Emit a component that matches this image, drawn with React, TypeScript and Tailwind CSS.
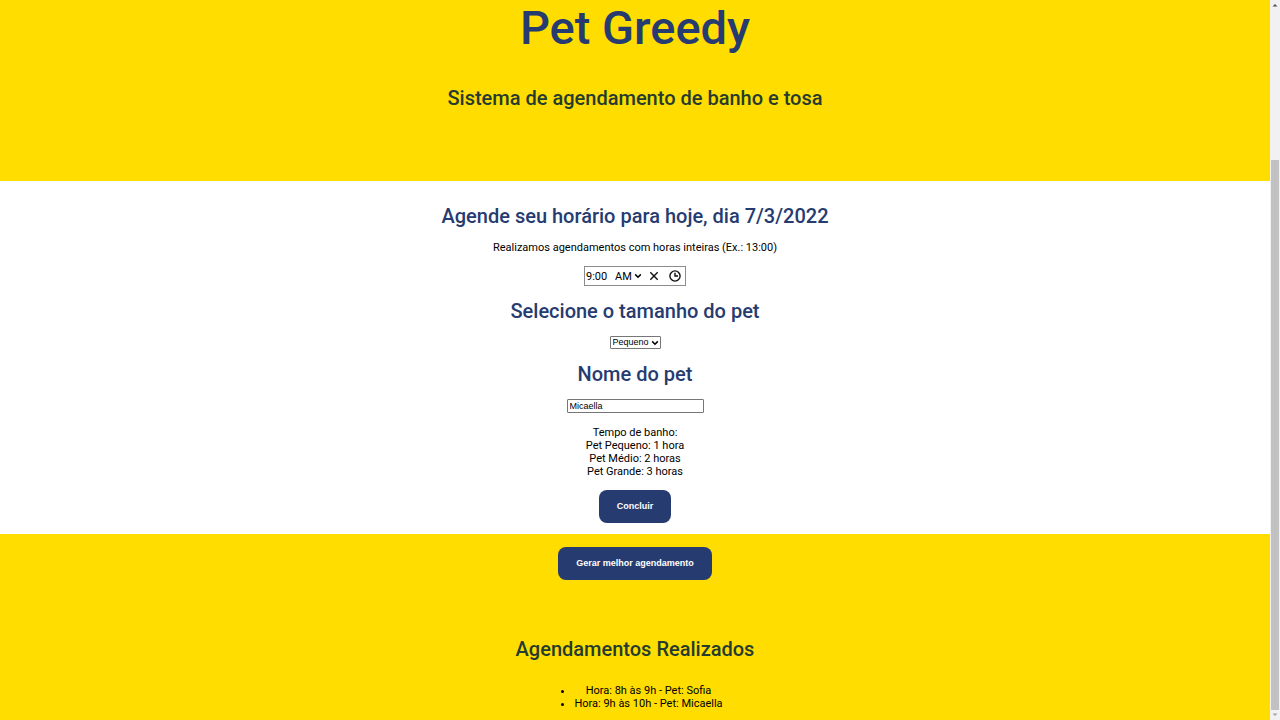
import { useState } from "react";

const bathTimes = ["Pet Pequeno: 1 hora", "Pet Médio: 2 horas", "Pet Grande: 3 horas"];
const bookings = ["Hora: 8h às 9h - Pet: Sofia", "Hora: 9h às 10h - Pet: Micaella"];

const heading = "text-[20px] leading-6 font-medium";
const button =
  "h-[33px] rounded-lg bg-[#263b70] px-[18px] font-['Liberation_Sans',sans-serif] text-[9px] font-bold text-white";

function Chevron({ className }: { className: string }) {
  return (
    <svg viewBox="0 0 8 6" className={className} fill="none" stroke="currentColor" strokeWidth="1.5" aria-hidden="true">
      <path d="M1.2 1.4 4 4.2 6.8 1.4" />
    </svg>
  );
}

function TimeField() {
  const [time, setTime] = useState("9:00");
  return (
    <div className="mt-3 flex h-5 w-[102px] items-center border border-[#8c8c8c] bg-white pl-px text-[11px]">
      <input
        aria-label="Horário"
        value={time}
        onChange={(e) => setTime(e.target.value)}
        className="w-[29px] bg-transparent outline-none"
      />
      <div className="relative flex items-center">
        <select aria-label="Período" className="w-[27px] appearance-none bg-transparent outline-none">
          <option>AM</option>
          <option>PM</option>
        </select>
        <Chevron className="pointer-events-none absolute right-0 h-[6px] w-2" />
      </div>
      <button type="button" aria-label="Limpar" onClick={() => setTime("")} className="ml-[7px]">
        <svg viewBox="0 0 10 10" className="size-[10px]" fill="none" stroke="#111" strokeWidth="1.4" aria-hidden="true">
          <path d="m1.3 1.3 7.4 7.4M8.7 1.3 1.3 8.7" />
        </svg>
      </button>
      <button type="button" aria-label="Escolher horário" className="ml-[10px]">
        <svg viewBox="0 0 12 12" className="size-3" fill="none" stroke="#111" strokeWidth="1.4" aria-hidden="true">
          <circle cx="6" cy="6" r="5.1" />
          <path d="M6 2.8V6h3" />
        </svg>
      </button>
    </div>
  );
}

function Scrollbar() {
  return (
    <div className="flex w-[10px] shrink-0 flex-col items-center bg-[#f1f1f1]" aria-hidden="true">
      <svg viewBox="0 0 10 10" className="size-[10px]">
        <path d="M2.5 6.5 5 4l2.5 2.5z" fill="#505050" />
      </svg>
      <div className="basis-[150px]" />
      <div className="w-2 grow bg-[#c1c1c1]" />
      <svg viewBox="0 0 10 10" className="size-[10px]">
        <path d="M2.5 3.5 5 6l2.5-2.5z" fill="#a3a3a3" />
      </svg>
    </div>
  );
}

export default function App() {
  const [name, setName] = useState("Micaella");
  return (
    <div className="flex h-screen overflow-hidden bg-[#ffdd00] font-[Roboto,sans-serif] text-[11px] leading-[13px] text-black">
      <div className="min-w-0 grow text-center">
        <header className="flex flex-col items-center pb-[71px]">
          <h1 className="text-[47px] leading-[56px] font-medium text-[#263b70]">Pet Greedy</h1>
          <h2 className={`mt-[30px] text-[#263b30] ${heading}`}>Sistema de agendamento de banho e tosa</h2>
        </header>

        <main>
          <form className="flex flex-col items-center bg-white pt-[23px] pb-[11px]" onSubmit={(e) => e.preventDefault()}>
            <h2 className={`text-[#263b70] ${heading}`}>Agende seu horário para hoje, dia 7/3/2022</h2>
            <p className="mt-[13px]">Realizamos agendamentos com horas inteiras (Ex.: 13:00)</p>
            <TimeField />
            <label htmlFor="size" className={`mt-[13px] text-[#263b70] ${heading}`}>
              Selecione o tamanho do pet
            </label>
            <div className="relative mt-[13px] flex items-center">
              <select
                id="size"
                className="h-[13px] w-[51px] appearance-none rounded-[1px] border border-[#767676] bg-white pl-[2px] font-['Liberation_Sans',sans-serif] text-[9px] leading-[11px]"
              >
                <option>Pequeno</option>
                <option>Médio</option>
                <option>Grande</option>
              </select>
              <Chevron className="pointer-events-none absolute right-[2px] h-[6px] w-2" />
            </div>
            <label htmlFor="pet" className={`mt-[13px] text-[#263b70] ${heading}`}>
              Nome do pet
            </label>
            <input
              id="pet"
              value={name}
              onChange={(e) => setName(e.target.value)}
              className="mt-[13px] h-[14px] w-[137px] rounded-[1px] border border-[#767676] bg-white px-[2px] font-['Liberation_Sans',sans-serif] text-[9px] leading-3"
            />
            <div className="mt-[13px]">
              <p>Tempo de banho:</p>
              {bathTimes.map((line) => (
                <p key={line}>{line}</p>
              ))}
            </div>
            <button type="submit" className={`mt-3 ${button}`}>
              Concluir
            </button>
          </form>

          <section className="flex flex-col items-center pt-[13px]">
            <button type="button" className={button}>
              Gerar melhor agendamento
            </button>
            <h2 className={`mt-[57px] text-[#263b30] ${heading}`}>Agendamentos Realizados</h2>
            <ul className="mt-[23px] list-disc pl-[27px]">
              {bookings.map((line) => (
                <li key={line}>{line}</li>
              ))}
            </ul>
          </section>
        </main>
      </div>
      <Scrollbar />
    </div>
  );
}
